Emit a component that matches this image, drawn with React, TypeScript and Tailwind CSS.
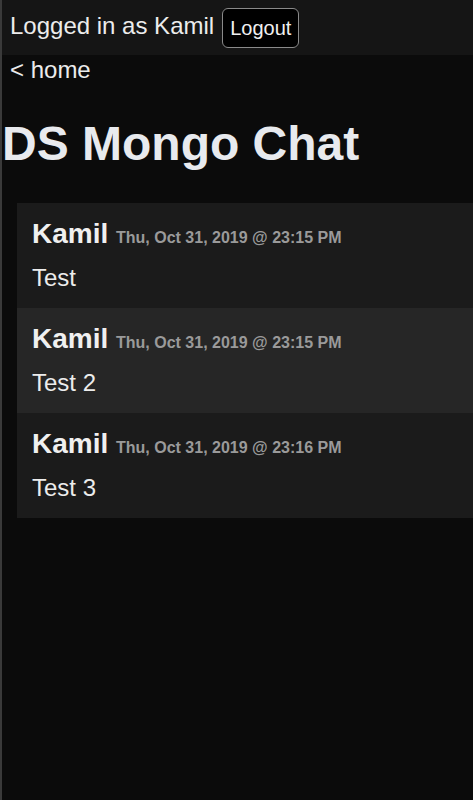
import React from "react";

const messages = [
  { name: "Kamil", date: "Thu, Oct 31, 2019 @ 23:15 PM", text: "Test", bg: "bg-[#1b1b1b]" },
  { name: "Kamil", date: "Thu, Oct 31, 2019 @ 23:15 PM", text: "Test 2", bg: "bg-[#262626]" },
  { name: "Kamil", date: "Thu, Oct 31, 2019 @ 23:16 PM", text: "Test 3", bg: "bg-[#1b1b1b]" },
];

export default function App() {
  return (
    <div
      className="min-h-[800px] bg-[#0b0b0b] border-l-2 border-[#3a3a3a] text-[#ececec] overflow-hidden"
      style={{ fontFamily: '"Liberation Sans", Arial, sans-serif' }}
    >
      <div className="h-[55px] bg-[#151515] flex items-start pt-[8px] px-[8px]">
        <span className="text-[24px] leading-[28px] mt-[4px]">Logged in as Kamil</span>
        <button className="ml-[8px] h-[40px] px-[7px] text-[20px] leading-[23px] bg-black border border-[#8a8a8a] rounded-[6px] text-[#f0f0f0]">
          Logout
        </button>
      </div>
      <div className="px-[8px] pt-[1px] text-[24px] leading-[28px]">&lt; home</div>
      <h1 className="mt-[32px] text-[48px] font-bold leading-[55px] text-[#e8eaee]">DS Mongo Chat</h1>
      <div className="mt-[32px] ml-[15px] w-[500px]">
        {messages.map((m, i) => (
          <div key={i} className={`${m.bg} pl-[15px] pt-[15px] pb-[17px]`}>
            <div className="text-[28px] leading-[32px] h-[32px]">
              <span className="font-bold text-[#f0f0f0]">{m.name} </span>
              <span className="text-[16px] leading-none font-bold text-[#9a9a9a]">{m.date}</span>
            </div>
            <div className="mt-[15px] text-[24px] leading-[26px]">{m.text}</div>
          </div>
        ))}
      </div>
    </div>
  );
}
